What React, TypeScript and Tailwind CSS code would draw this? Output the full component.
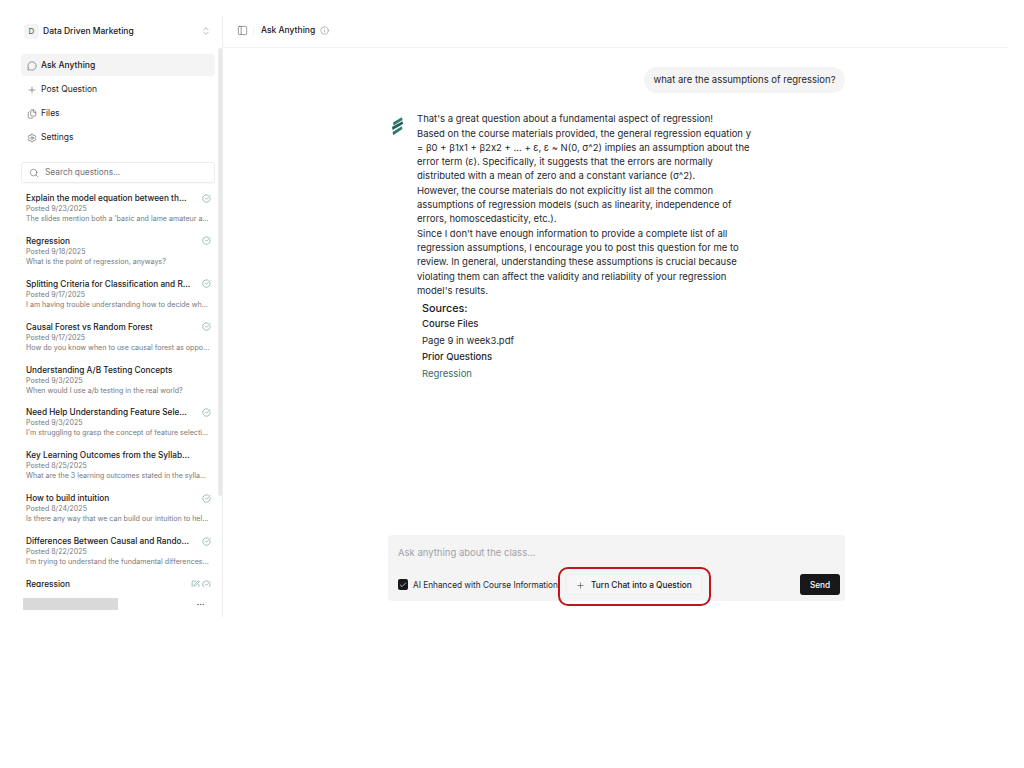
import React from "react";
import { ChevronsUpDown, MessageCircle, Plus, Files, Settings, Search, CircleCheckBig, PanelLeft, Info, Ellipsis, Check, SquarePen } from "lucide-react";

const items = [
  ["Explain the model equation between th...", "Posted 9/23/2025", "The slides mention both a 'basic and lame amateur a...", true],
  ["Regression", "Posted 9/18/2025", "What is the point of regression, anyways?", true],
  ["Splitting Criteria for Classification and R...", "Posted 9/17/2025", "I am having trouble understanding how to decide wh...", true],
  ["Causal Forest vs Random Forest", "Posted 9/17/2025", "How do you know when to use causal forest as oppo...", true],
  ["Understanding A/B Testing Concepts", "Posted 9/3/2025", "When would I use a/b testing in the real world?", false],
  ["Need Help Understanding Feature Sele...", "Posted 9/3/2025", "I'm struggling to grasp the concept of feature selecti...", true],
  ["Key Learning Outcomes from the Syllab...", "Posted 8/25/2025", "What are the 3 learning outcomes stated in the sylla...", false],
  ["How to build intuition", "Posted 8/24/2025", "Is there any way that we can build our intuition to hel...", true],
  ["Differences Between Causal and Rando...", "Posted 8/22/2025", "I'm trying to understand the fundamental differences...", true],
] as const;

const nav = [
  [MessageCircle, "Ask Anything"],
  [Plus, "Post Question"],
  [Files, "Files"],
  [Settings, "Settings"],
] as const;

const body = [
  "That's a great question about a fundamental aspect of regression!",
  "Based on the course materials provided, the general regression equation y = β0 + β1x1 + β2x2 + ... + ε, ε ~ N(0, σ^2) implies an assumption about the error term (ε). Specifically, it suggests that the errors are normally distributed with a mean of zero and a constant variance (σ^2).",
  "However, the course materials do not explicitly list all the common assumptions of regression models (such as linearity, independence of errors, homoscedasticity, etc.).",
  "Since I don't have enough information to provide a complete list of all regression assumptions, I encourage you to post this question for me to review. In general, understanding these assumptions is crucial because violating them can affect the validity and reliability of your regression model's results.",
];

function Logo() {
  return (
    <svg width="13" height="19" viewBox="0 0 13 19" className="mt-[5px] shrink-0">
      <path d="M2 5.5 L10.8 0.3 L11.6 3 L2.6 8.4 Z" fill="#2f7a72" />
      <path d="M1 10 L11.6 4.2 L12 7 L1.6 13 Z" fill="#1f5f58" />
      <path d="M1.6 15 L10.8 9.2 L11.4 12 L2.2 18.2 Z" fill="#2f7a72" />
    </svg>
  );
}

export default function App() {
  return (
    <div className="flex h-[617px] w-[1008px] bg-white text-[#18181b] [font-family:Inter,'Liberation_Sans',sans-serif]">
      <aside className="relative mt-[16px] flex h-[601px] w-[223px] shrink-0 flex-col border-r border-[#ececee]">
        <div className="flex h-[30px] items-center pl-[24px] pr-[11px]">
          <div className="flex h-[15px] w-[15px] items-center justify-center rounded-[3px] bg-[#f4f4f5] text-[8px] text-[#52525b]">D</div>
          <span className="ml-[4px] text-[8.5px] font-medium">Data Driven Marketing</span>
          <ChevronsUpDown className="ml-auto h-[10px] w-[10px] text-[#71717a]" strokeWidth={1.25} />
        </div>
        <nav className="mt-[8px] flex flex-col pl-[21px] pr-[7px]">
          {nav.map(([Icon, label], i) => (
            <div key={label} className={`flex h-[22px] items-center gap-[4px] rounded-[4px] pl-[6px] pt-px text-[8.5px] ${i === 0 ? "bg-[#f4f4f5]" : ""} ${i > 0 ? "mt-[2px]" : ""}`}>
              <Icon className="h-[10px] w-[10px] text-[#3f3f46]" strokeWidth={1.25} />
              <span className={i === 0 ? "font-medium" : "text-[#27272a]"}>{label}</span>
            </div>
          ))}
        </nav>
        <div className="ml-[21px] mr-[7px] mt-[14px] flex h-[21px] shrink-0 items-center rounded-[3px] border border-[#ececee] pl-[7px] shadow-[0_1px_1px_rgba(0,0,0,0.03)]">
          <Search className="h-[10px] w-[10px] text-[#52525b]" strokeWidth={1.25} />
          <span className="ml-[6px] text-[8.3px] text-[#71717a]">Search questions...</span>
        </div>
        <div className="mt-[9px] flex h-[395px] shrink-0 flex-col overflow-hidden pl-[26px] pr-[11px]">
          {items.map(([title, date, text, done]) => (
            <div key={date + title} className="mb-[9.9px] shrink-0">
              <div className="flex h-[12px] items-center justify-between">
                <span className="whitespace-nowrap text-[8.25px] font-medium leading-[12px]">{title}</span>
                {done && <CircleCheckBig className="h-[9px] w-[9px] text-[#2f7a72]" strokeWidth={1.25} />}
              </div>
              <div className="h-[10px] whitespace-nowrap text-[7.1px] leading-[10px] text-[#77777a]">{date}</div>
              <div className="h-[11px] whitespace-nowrap text-[7.1px] leading-[10px] text-[#77777a]">{text}</div>
            </div>
          ))}
          <div className="flex h-[12px] shrink-0 items-center justify-between">
            <span className="text-[8.25px] font-medium leading-[12px]">Regression</span>
            <span className="flex items-center gap-[2px] text-[#2f7a72]">
              <SquarePen className="h-[9px] w-[9px]" strokeWidth={1.25} />
              <CircleCheckBig className="h-[9px] w-[9px]" strokeWidth={1.25} />
            </span>
          </div>
        </div>
        <div className="flex flex-1 items-start justify-between pl-[23px] pr-[17px] pt-[11px]">
          <div className="h-[12px] w-[95px] bg-[#d9d9d9]" />
          <Ellipsis className="mt-[2px] h-[9px] w-[9px] text-[#52525b]" strokeWidth={1.5} />
        </div>
        <div className="absolute right-0 top-[32px] h-[448px] w-[4px] rounded-full bg-[#e9e9eb]" />
      </aside>

      <main className="flex h-full min-w-0 flex-1 flex-col">
        <header className="flex h-[48px] shrink-0 items-center border-b border-[#f0f0f1] pl-[14px] pt-[14px]">
          <PanelLeft className="h-[11px] w-[11px] text-[#52525b]" strokeWidth={1.25} />
          <div className="ml-[5px] h-[8px] w-px bg-[#f0f0f1]" />
          <span className="ml-[7px] text-[8.5px] font-medium">Ask Anything</span>
          <Info className="ml-[5px] h-[9px] w-[9px] text-[#71717a]" strokeWidth={1.25} />
        </header>
        <div className="ml-[165px] flex w-[457px] flex-1 flex-col">
          <div className="mt-[19px] self-end rounded-full bg-[#f4f4f5] px-[9.5px] py-[6px] text-[9.5px] leading-[14.3px] text-[#27272a]">
            what are the assumptions of regression?
          </div>
          <div className="mt-[19px] flex pl-[3px]">
            <Logo />
            <div className="ml-[13px] w-[338px]">
              <div className="text-[9.5px] leading-[14.3px] text-[#27272a]">
                {body.map((t) => <p key={t}>{t}</p>)}
              </div>
              <div className="ml-[5px] mt-[3px]">
                <div className="text-[10.8px] font-medium leading-[15px]">Sources:</div>
                <div className="text-[9.5px] font-medium leading-[16.6px] text-[#27272a]">Course Files</div>
                <div className="text-[9.5px] leading-[16.6px] text-[#27272a]">Page 9 in week3.pdf</div>
                <div className="text-[9.5px] font-medium leading-[16.6px] text-[#27272a]">Prior Questions</div>
                <div className="text-[9.5px] leading-[16.6px] text-[#2f6f68]">Regression</div>
              </div>
            </div>
          </div>
          <div className="relative mt-auto mb-[16px] flex h-[66px] flex-col rounded-[4px] bg-[#f4f4f5] pl-[10px] pr-[5px] pt-[11px]">
            <div className="text-[9.5px] leading-[14px] text-[#a1a1aa]">Ask anything about the class...</div>
            <div className="mt-[14px] flex items-center">
              <div className="flex h-[11px] w-[10px] items-center justify-center rounded-[2px] bg-[#18181b]">
                <Check className="h-[8px] w-[8px] text-white" strokeWidth={2} />
              </div>
              <span className="ml-[5px] whitespace-nowrap pt-px text-[8.25px] text-[#27272a]">AI Enhanced with Course Information</span>
              <div className="ml-[8px] flex h-[21px] w-[136px] shrink-0 items-center justify-center gap-[6px] rounded-[3px] border border-[#eeeeef] bg-[#f6f6f7] pt-px text-[8.3px] font-medium">
                <Plus className="h-[9px] w-[9px]" strokeWidth={1.25} />
                Turn Chat into a Question
              </div>
              <div className="ml-auto flex h-[21px] w-[40px] items-center justify-center rounded-[3px] bg-[#18181b] pt-px text-[8.25px] font-medium text-white">Send</div>
            </div>
            <div className="absolute left-[170px] top-[32px] h-[39px] w-[153px] rounded-[10px] border-2 border-[#c0141c]" />
          </div>
        </div>
      </main>
    </div>
  );
}
